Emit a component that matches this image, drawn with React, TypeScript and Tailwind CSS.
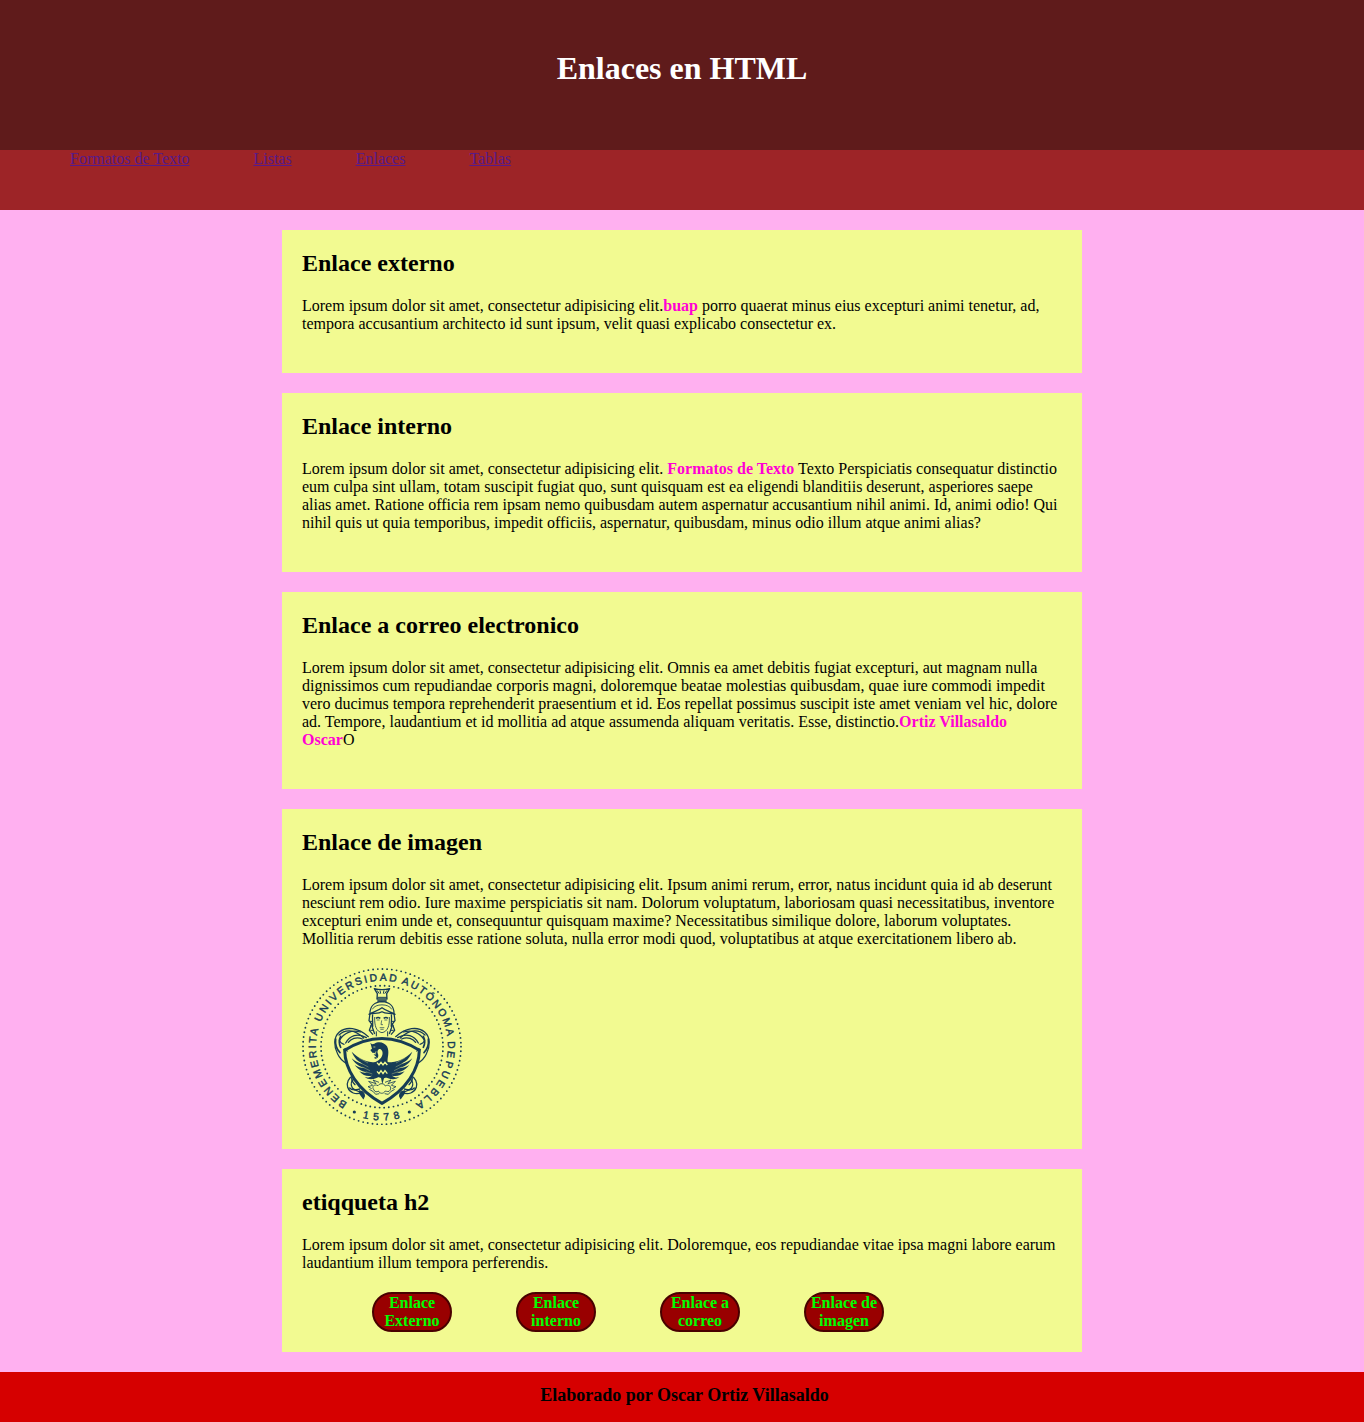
import type { ReactNode } from "react";

const navLinks = ["Formatos de Texto", "Listas", "Enlaces", "Tablas"];
const buttons = ["Enlace Externo", "Enlace interno", "Enlace a correo", "Enlace de imagen"];

// Words around the seal: distance along the arc and the length each one fills.
const sealWords = [
  { word: "BENEMERITA", start: 0, length: 256 },
  { word: "UNIVERSIDAD", start: 277, length: 279 },
  { word: "AUTÓNOMA", start: 572, length: 220 },
  { word: "DE", start: 807, length: 49 },
  { word: "PUEBLA", start: 865, length: 164 },
];

function Highlight({ children }: { children: ReactNode }) {
  return <a className="font-bold text-[#ff00d4]">{children}</a>;
}

function Card({ title, height, children }: { title: string; height: string; children: ReactNode }) {
  return (
    <section className={`mx-auto mb-5 w-[800px] bg-[#f2fa91] px-5 pt-5 ${height}`}>
      <h2 className="mb-5 text-2xl leading-[27px] font-bold">{title}</h2>
      {children}
    </section>
  );
}

function Wing() {
  return (
    <g>
      <path d="M244 307 C214 308 190 297 167 275 C175 295 186 304 200 311 C187 309 177 304 167 295 C177 312 191 321 207 324 C195 324 185 321 176 315 C188 331 201 336 216 337 C206 339 198 338 190 334 C202 348 215 350 228 347 C221 353 213 353 206 351 C221 363 240 357 253 347 L258 310 Z" />
      <path d="M188 293 L216 309 M190 307 L217 321 M199 321 L222 332 M209 335 L229 342" fill="none" stroke="#f2fa91" strokeWidth="1" />
    </g>
  );
}

function Drapery() {
  return (
    <g fill="none" stroke="#163c56" strokeWidth="3.8" strokeLinecap="round">
      <path d="M217 230 C185 202 151 199 130 216 C112 232 113 259 125 282 C131 295 139 303 151 310" />
      <path d="M203 234 C174 206 146 208 129 225" />
      <path d="M130 241 C144 218 168 208 193 216 M130 241 C132 248 137 250 144 253" />
      <path d="M211 233 C184 217 161 228 149 249 M199 237 C180 228 164 238 157 247" strokeWidth="4" />
      <path d="M119 237 C117 254 124 270 132 278 M134 229 C126 245 130 254 134 262" strokeWidth="5" />
      <path d="M174 346 C157 352 151 369 155 382 C161 399 180 405 196 398 M178 353 C166 361 163 373 169 384 C176 392 187 393 198 399" />
      <path d="M168 352 C165 359 169 366 177 374 M161 384 C169 394 181 389 191 387" strokeWidth="4" />
      <path d="M190 393 C203 394 209 404 202 415 C197 407 190 404 190 393" fill="#163c56" />
    </g>
  );
}

function UniversitySeal() {
  return (
    <svg className="block h-[157px] w-[160px]" viewBox="18 24 480 471" preserveAspectRatio="none" fill="#163c56" role="img" aria-label="Benemérita Universidad Autónoma de Puebla">
      <defs>
        <path id="seal-name" d="M154 429 A198 198 0 1 1 357 431.5" />
        <path id="seal-year" d="M170 463 A222 222 0 0 0 346 463" />
      </defs>
      <g fill="none" stroke="#163c56" strokeLinecap="round" strokeWidth="5.6">
        <ellipse cx="258" cy="260" rx="237" ry="233" pathLength="104" strokeDasharray="0 1" />
        <circle cx="258" cy="260" r="183" pathLength="82" strokeDasharray="0 1" />
      </g>
      <g fontFamily="Liberation Sans, sans-serif" fontSize="31" stroke="#163c56" strokeWidth="1.3">
        {sealWords.map(({ word, start, length }) => (
          <text key={word}>
            <textPath href="#seal-name" startOffset={start} textLength={length}>
              {word}
            </textPath>
          </text>
        ))}
        <text textAnchor="middle" letterSpacing="15">
          <textPath href="#seal-year" startOffset="53%">1578</textPath>
        </text>
      </g>
      <circle cx="175" cy="456" r="4.8" />
      <circle cx="340" cy="456" r="4.8" />

      <Drapery />
      <g transform="translate(516 0) scale(-1 1)">
        <Drapery />
      </g>

      {/* Helmeted head */}
      <g fill="none" stroke="#163c56" strokeWidth="3.8" strokeLinejoin="round">
        <path d="M235 86 Q258 92 281 86 L272 101 L273 117 L243 117 L244 101 Z" strokeWidth="4" />
        <path d="M243 91 L250 101 M252 91 L254 101 M264 91 L262 101 M273 91 L266 101 M244 112 H273" strokeWidth="3" />
        <path d="M244 123 H272" strokeWidth="5" />
        <path d="M222 160 C222 139 236 126 258 125 C280 126 294 139 294 160" />
        <path d="M229 148 C237 130 279 130 287 148" strokeWidth="2.5" />
        <path d="M219 163 C231 155 242 155 258 143 C274 155 285 155 297 163 C281 158 269 163 258 155 C246 163 233 158 219 163 Z" />
        <path d="M222 160 L219 182 L227 192 L220 211 L231 224 M294 160 L297 182 L289 192 L296 211 L285 224" />
        <path d="M230 163 C228 178 232 190 229 202 L236 222 M286 163 C288 178 284 190 287 202 L280 222" />
        <path d="M236 171 C235 198 241 215 258 218 C275 215 281 198 280 171" strokeWidth="2.5" />
        <path d="M240 175 Q246 170 253 175 M263 175 Q270 170 276 175" strokeWidth="4.5" />
        <path d="M242 180 L251 180 M265 180 L274 180 M257 181 L255 194 L261 194 M251 203 H265 M253 208 H263" strokeWidth="2" />
        <path d="M241 214 V229 M275 214 V229 M221 184 H229 M222 198 H232 M223 211 H234 M287 184 H295 M284 198 H294 M282 211 H293" strokeWidth="3" />
      </g>

      {/* Shield */}
      <path d="M146 271 Q258 200 370 271 C369 328 332 389 258 430 C184 389 147 328 146 271 Z" fill="#f2fa91" stroke="#163c56" strokeWidth="9" strokeLinejoin="miter" />
      <path d="M140 268 L156 276 L150 263 Z M376 268 L360 276 L366 263 Z" />

      {/* Bird */}
      <Wing />
      <g transform="translate(516 0) scale(-1 1)">
        <Wing />
      </g>
      <path d="M223 248 L228 253 L235 251 C248 242 266 247 273 259 C282 277 273 294 275 307 L285 313 L277 350 L264 355 L259 373 L255 354 L240 349 L234 308 L244 303 C257 296 264 281 257 271 C251 262 241 271 246 282 C250 294 239 300 234 293 L240 290 L233 284 L239 279 L229 278 L223 270 L228 266 Z" />
      <path d="M232 261 L238 261 M240 274 L236 287 L241 293" fill="none" stroke="#f2fa91" strokeWidth="2" />
      <path d="M243 308 L249 315 L255 307 L261 315 L267 307 L274 315 M243 334 L249 341 L255 332 L261 341 L267 332 L274 341" fill="none" stroke="#f2fa91" strokeWidth="4" />

      {/* Clouds and rays */}
      <g fill="none" stroke="#163c56" strokeWidth="2.5">
        <path d="M234 390 C225 379 236 371 246 377 C252 368 265 370 268 378 C278 371 289 381 282 391 C279 397 272 394 268 393 C262 403 251 401 247 393 C243 397 236 396 234 390 Z" />
        <path d="M249 367 L231 360 L240 371 L218 364 L230 376 L216 380 L227 386 M267 367 L285 360 L276 371 L298 364 L286 376 L300 380 L289 386 M220 388 L232 395 L239 403 L250 401 M296 388 L284 395 L277 403 L266 401" />
      </g>
    </svg>
  );
}

export default function App() {
  return (
    <div className="flex min-h-[1422px] flex-col bg-[#ffb0f0] font-['Liberation_Serif',serif] text-base leading-[18px] text-black">
      <header className="h-[150px] bg-[#5f1b1b] pt-[50px]">
        <h1 className="text-center text-[32px] leading-9 font-bold text-white">Enlaces en HTML</h1>
      </header>
      <nav className="mb-5 flex h-[60px] gap-16 bg-[#9d2427] pl-[70px] text-[#551a8b]">
        {navLinks.map((link) => (
          <a key={link} href="#" className="h-[18px] whitespace-nowrap underline">
            {link}
          </a>
        ))}
      </nav>
      <main className="whitespace-nowrap">
        <Card title="Enlace externo" height="h-[143px]">
          <p>
            Lorem ipsum dolor sit amet, consectetur adipisicing elit.<Highlight>buap</Highlight> porro quaerat minus eius excepturi animi tenetur, ad,
            <br />
            tempora accusantium architecto id sunt ipsum, velit quasi explicabo consectetur ex.
          </p>
        </Card>
        <Card title="Enlace interno" height="h-[179px]">
          <p>
            Lorem ipsum dolor sit amet, consectetur adipisicing elit. <Highlight>Formatos de Texto</Highlight> Texto Perspiciatis consequatur distinctio
            <br />
            eum culpa sint ullam, totam suscipit fugiat quo, sunt quisquam est ea eligendi blanditiis deserunt, asperiores saepe
            <br />
            alias amet. Ratione officia rem ipsam nemo quibusdam autem aspernatur accusantium nihil animi. Id, animi odio! Qui
            <br />
            nihil quis ut quia temporibus, impedit officiis, aspernatur, quibusdam, minus odio illum atque animi alias?
          </p>
        </Card>
        <Card title="Enlace a correo electronico" height="h-[197px]">
          <p>
            Lorem ipsum dolor sit amet, consectetur adipisicing elit. Omnis ea amet debitis fugiat excepturi, aut magnam nulla
            <br />
            dignissimos cum repudiandae corporis magni, doloremque beatae molestias quibusdam, quae iure commodi impedit
            <br />
            vero ducimus tempora reprehenderit praesentium et id. Eos repellat possimus suscipit iste amet veniam vel hic, dolore
            <br />
            ad. Tempore, laudantium et id mollitia ad atque assumenda aliquam veritatis. Esse, distinctio.<Highlight>Ortiz Villasaldo
            <br />
            Oscar</Highlight>O
          </p>
        </Card>
        <Card title="Enlace de imagen" height="h-[340px]">
          <p className="mb-5">
            Lorem ipsum dolor sit amet, consectetur adipisicing elit. Ipsum animi rerum, error, natus incidunt quia id ab deserunt
            <br />
            nesciunt rem odio. Iure maxime perspiciatis sit nam. Dolorum voluptatum, laboriosam quasi necessitatibus, inventore
            <br />
            excepturi enim unde et, consequuntur quisquam maxime? Necessitatibus similique dolore, laborum voluptates.
            <br />
            Mollitia rerum debitis esse ratione soluta, nulla error modi quod, voluptatibus at atque exercitationem libero ab.
          </p>
          <UniversitySeal />
        </Card>
        <Card title="etiqqueta h2" height="h-[183px]">
          <p className="mb-5">
            Lorem ipsum dolor sit amet, consectetur adipisicing elit. Doloremque, eos repudiandae vitae ipsa magni labore earum
            <br />
            laudantium illum tempora perferendis.
          </p>
          <div className="flex gap-16 pl-[70px]">
            {buttons.map((label) => (
              <a key={label} className="h-10 w-20 rounded-[20px] border-2 border-[#490000] bg-[#990000] text-center font-bold whitespace-normal text-[#00ff00]">
                {label}
              </a>
            ))}
          </div>
        </Card>
      </main>
      <footer className="h-[50px] bg-[#d60000] pt-[13px] pl-[5px] text-center text-lg leading-[21px] font-bold">
        Elaborado por Oscar Ortiz Villasaldo
      </footer>
    </div>
  );
}
